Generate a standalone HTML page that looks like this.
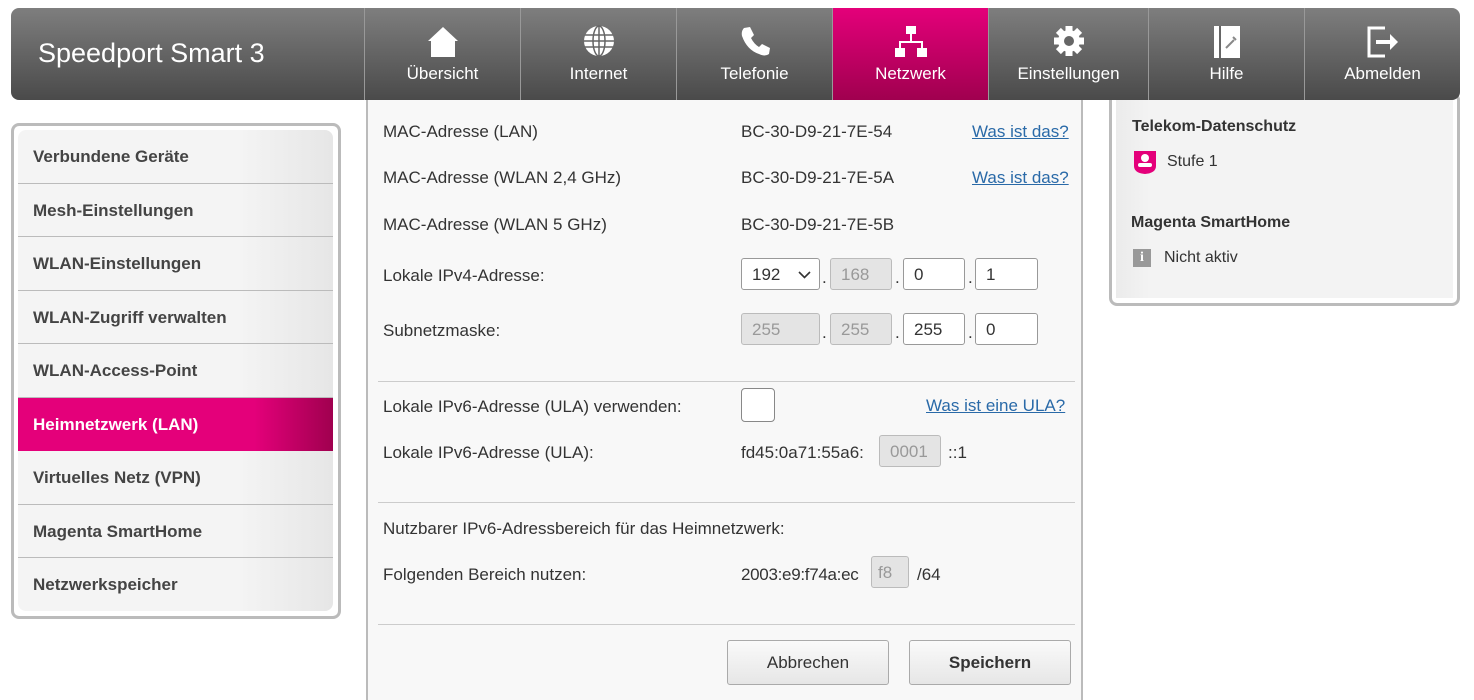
<!DOCTYPE html>
<html><head><meta charset="utf-8"><style>
*{box-sizing:border-box;margin:0;padding:0}
body{width:1474px;height:700px;background:#fff;font-family:"Liberation Sans",Arial,sans-serif;color:#333;position:relative;overflow:hidden}
.hdr{position:absolute;left:11px;top:8px;width:1449px;height:92px;border-radius:8px;background:linear-gradient(#7e7e7e,#4a4a4a);overflow:hidden}
.logo{position:absolute;left:27px;top:30px;color:#fff;font-size:27px}
.tab{position:absolute;top:0;height:92px;border-left:1px solid #999;color:#fff;font-size:17px;text-align:center}
.tab span{position:absolute;left:0;right:0;top:56px}
.tab svg{position:absolute;left:50%;top:16px;transform:translateX(-50%)}
.tab.act{background:linear-gradient(#e4007a,#a0004f)}
.main{position:absolute;left:366px;top:100px;width:717px;height:600px;background:#f8f8f8;border-left:2px solid #bbb;border-right:2px solid #bbb}
.t{position:absolute;font-size:17px;color:#333;white-space:nowrap}
.lnk{color:#2a6aa8;text-decoration:underline}
.in{position:absolute;height:32px;border:1px solid #999;border-radius:3px;background:#fff;font-size:17px;padding:6px 10px;color:#333}
.in.d{background:#e4e4e4;color:#999;border-color:#bbb}
.hr{position:absolute;left:10px;width:697px;height:1px;background:#ccc}
.btn{position:absolute;top:540px;width:162px;height:45px;border:1px solid #aaa;border-radius:3px;background:linear-gradient(#fafafa,#e6e6e6);font-size:17px;text-align:center;line-height:43px;color:#333}
.side{position:absolute;left:11px;top:123px;width:330px;height:496px;border:3px solid #bbb;border-radius:8px;background:#fff}
.sin{position:absolute;left:4px;top:4px;width:315px;height:481px;border-radius:8px;background:linear-gradient(90deg,#f4f4f4 70%,#e6e6e6);overflow:hidden}
.it{height:53.5px;border-bottom:1px solid #bbb;font-weight:bold;font-size:17px;padding-left:15px;line-height:53px;color:#444}
.it.act{background:linear-gradient(90deg,#e4007a 75%,#a0004f);color:#fff;border-bottom:none}
.rb{position:absolute;left:1109px;top:92px;width:351px;height:214px;border:3px solid #bbb;border-radius:8px;background:#fff}
.rin{position:absolute;left:4px;top:0;width:337px;height:203px;background:linear-gradient(90deg,#ebebeb,#f3f3f3 10%)}
</style></head><body>
<div class="side"><div class="sin">
<div class="it">Verbundene Geräte</div><div class="it">Mesh-Einstellungen</div><div class="it">WLAN-Einstellungen</div><div class="it">WLAN-Zugriff verwalten</div><div class="it">WLAN-Access-Point</div><div class="it act">Heimnetzwerk (LAN)</div><div class="it">Virtuelles Netz (VPN)</div><div class="it">Magenta SmartHome</div><div class="it" style="border:none">Netzwerkspeicher</div>
</div></div>
<div class="rb"><div class="rin">
<div class="t" style="left:16px;top:23px;font-weight:bold;font-size:16px">Telekom-Datenschutz</div>
<svg style="position:absolute;left:17px;top:54px" width="24" height="26"><path d="M1 2h22v15q0 7-11 8q-11-1-11-8z" fill="#e4007a"/><circle cx="12" cy="9" r="4" fill="#fff"/><rect x="5" y="14" width="14" height="4" rx="2" fill="#fff"/></svg>
<div class="t" style="left:51px;top:58px;font-size:16px">Stufe 1</div>
<div class="t" style="left:15px;top:119px;font-weight:bold;font-size:16px">Magenta SmartHome</div>
<div style="position:absolute;left:17px;top:154px;width:18px;height:18px;background:#999;color:#fff;font-family:'Liberation Serif',serif;font-weight:bold;font-size:14px;text-align:center;line-height:18px">i</div>
<div class="t" style="left:48px;top:154px;font-size:16px">Nicht aktiv</div>
</div></div>
<div class="hdr">
<div class="logo">Speedport Smart 3</div>
<div class="tab" style="left:353px;width:156px"><svg width="36" height="36" viewBox="0 0 36 36"><path d="M18 3L3 17h3v16h24V17h3z" fill="#fff"/></svg><span>Übersicht</span></div>
<div class="tab" style="left:509px;width:156px"><svg width="34" height="34" viewBox="0 0 34 34"><circle cx="17" cy="17" r="15" fill="#fff"/><g stroke="#666" stroke-width="1.5" fill="none"><ellipse cx="17" cy="17" rx="6" ry="15"/><path d="M17 2v30M3 11h28M2 17h30M3 23h28"/></g></svg><span>Internet</span></div>
<div class="tab" style="left:665px;width:156px"><svg width="34" height="34" viewBox="0 0 34 34"><path d="M6 4l6-1 4 8-3 3q3 6 8 9l3-3 8 4-1 6q-4 3-10 0Q9 26 4 12q-1-5 2-8z" fill="#fff"/></svg><span>Telefonie</span></div>
<div class="tab act" style="left:821px;width:156px"><svg width="36" height="36" viewBox="0 0 36 36" fill="#fff"><rect x="13" y="2" width="10" height="8"/><rect x="17" y="10" width="2" height="8"/><rect x="6" y="17" width="24" height="2"/><rect x="6" y="17" width="2" height="8"/><rect x="28" y="17" width="2" height="8"/><rect x="2" y="24" width="10" height="9"/><rect x="24" y="24" width="10" height="9"/></svg><span>Netzwerk</span></div>
<div class="tab" style="left:977px;width:160px"><svg width="34" height="34" viewBox="0 0 34 34"><g fill="#fff"><circle cx="17" cy="17" r="11"/><g transform="translate(17 17)"><rect x="-3.5" y="-15" width="7" height="30"/><rect x="-3.5" y="-15" width="7" height="30" transform="rotate(45)"/><rect x="-3.5" y="-15" width="7" height="30" transform="rotate(90)"/><rect x="-3.5" y="-15" width="7" height="30" transform="rotate(135)"/></g></g><circle cx="17" cy="17" r="5" fill="#666"/></svg><span>Einstellungen</span></div>
<div class="tab" style="left:1137px;width:156px"><svg width="30" height="36" viewBox="0 0 30 36"><rect x="2" y="2" width="26" height="32" fill="#fff"/><rect x="7" y="2" width="2" height="32" fill="#666"/><path d="M14 24l8-8m-1-3l3 3" stroke="#888" stroke-width="2"/></svg><span>Hilfe</span></div>
<div class="tab" style="left:1293px;width:156px"><svg width="36" height="36" viewBox="0 0 36 36"><path d="M20 4H4v28h16" stroke="#fff" stroke-width="3" fill="none"/><path d="M11 16h14v-6l8 8-8 8v-6H11z" fill="#fff"/></svg><span>Abmelden</span></div>
</div>
<div class="main">
<div class="t" style="left:15px;top:22px">MAC-Adresse (LAN)</div><div class="t" style="left:373px;top:22px">BC-30-D9-21-7E-54</div><div class="t lnk" style="left:604px;top:22px">Was ist das?</div>
<div class="t" style="left:15px;top:68px">MAC-Adresse (WLAN 2,4 GHz)</div><div class="t" style="left:373px;top:68px">BC-30-D9-21-7E-5A</div><div class="t lnk" style="left:604px;top:68px">Was ist das?</div>
<div class="t" style="left:15px;top:115px">MAC-Adresse (WLAN 5 GHz)</div><div class="t" style="left:373px;top:115px">BC-30-D9-21-7E-5B</div>
<div class="t" style="left:15px;top:166px">Lokale IPv4-Adresse:</div>
<div class="in" style="left:373px;top:158px;width:79px">192<svg style="position:absolute;right:8px;top:12px" width="13" height="8"><path d="M1 1l5.5 5.5L12 1" stroke="#333" stroke-width="1.6" fill="none"/></svg></div><div class="t" style="left:454px;top:168px">.</div>
<div class="in d" style="left:462px;top:158px;width:62px">168</div><div class="t" style="left:527px;top:168px">.</div>
<div class="in" style="left:535px;top:158px;width:62px">0</div><div class="t" style="left:600px;top:168px">.</div>
<div class="in" style="left:607px;top:158px;width:63px">1</div>
<div class="t" style="left:15px;top:221px">Subnetzmaske:</div>
<div class="in d" style="left:373px;top:213px;width:79px">255</div><div class="t" style="left:454px;top:223px">.</div>
<div class="in d" style="left:462px;top:213px;width:62px">255</div><div class="t" style="left:527px;top:223px">.</div>
<div class="in" style="left:535px;top:213px;width:62px">255</div><div class="t" style="left:600px;top:223px">.</div>
<div class="in" style="left:607px;top:213px;width:63px">0</div>
<div class="hr" style="top:281px"></div>
<div class="t" style="left:15px;top:297px">Lokale IPv6-Adresse (ULA) verwenden:</div>
<div style="position:absolute;left:373px;top:288px;width:34px;height:34px;border:1px solid #888;border-radius:4px;background:#fff"></div>
<div class="t lnk" style="left:558px;top:296px">Was ist eine ULA?</div>
<div class="t" style="left:15px;top:343px">Lokale IPv6-Adresse (ULA):</div>
<div class="t" style="left:373px;top:343px">fd45:0a71:55a6:</div>
<div class="in d" style="left:511px;top:335px;width:62px">0001</div>
<div class="t" style="left:580px;top:343px">::1</div>
<div class="hr" style="top:402px"></div>
<div class="t" style="left:15px;top:419px">Nutzbarer IPv6-Adressbereich für das Heimnetzwerk:</div>
<div class="t" style="left:15px;top:465px">Folgenden Bereich nutzen:</div>
<div class="t" style="left:373px;top:465px;letter-spacing:-0.3px">2003:e9:f74a:ec</div>
<div class="in d" style="left:503px;top:456px;width:38px;padding:6px 6px">f8</div>
<div class="t" style="left:549px;top:465px">/64</div>
<div class="hr" style="top:524px"></div>
<div class="btn" style="left:359px">Abbrechen</div>
<div class="btn" style="left:541px;font-weight:bold">Speichern</div>
</div>
</body></html>
